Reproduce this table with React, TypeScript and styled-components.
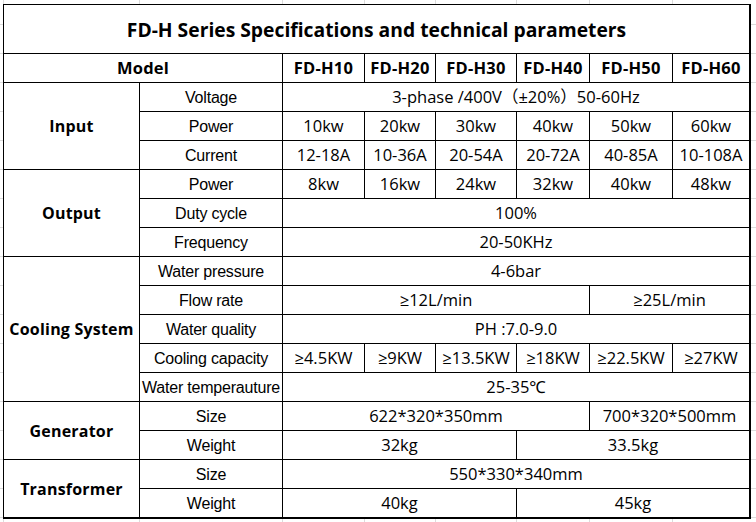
import React from "react";
import styled, { createGlobalStyle, css } from "styled-components";

const GlobalStyle = createGlobalStyle`
  html, body {
    margin: 0;
    padding: 0;
    background-color: #ffffff;
  }
  body {
    min-height: 522px;
    background-image:
      linear-gradient(#dcdcdc, #dcdcdc),
      linear-gradient(#dcdcdc, #dcdcdc),
      linear-gradient(#dcdcdc, #dcdcdc),
      linear-gradient(#dcdcdc, #dcdcdc),
      linear-gradient(#dcdcdc, #dcdcdc),
      linear-gradient(#dcdcdc, #dcdcdc),
      linear-gradient(#dcdcdc, #dcdcdc),
      linear-gradient(#dcdcdc, #dcdcdc),
      repeating-linear-gradient(to bottom, transparent 0 28px, #dcdcdc 28px 29px);
    background-size: 1px 100%, 1px 100%, 1px 100%, 1px 100%, 1px 100%, 1px 100%, 1px 100%, 1px 100%, 100% 100%;
    background-position: 3px 0, 139px 0, 282px 0, 364px 0, 435px 0, 516px 0, 589px 0, 672px 0, 0 25px;
    background-repeat: no-repeat, no-repeat, no-repeat, no-repeat, no-repeat, no-repeat, no-repeat, no-repeat, repeat;
  }
`;

const Page = styled.div`
  padding: 4px 0 0 3px;
`;

const Table = styled.div`
  display: grid;
  width: fit-content;
  grid-template-columns: 135px 142px 81px 70px 80px 72px 82px 76px;
  grid-template-rows: 48px repeat(16, 28px);
  gap: 1px;
  padding: 1px 2px 2px 1px;
  background: #000000;
`;

type Variant = "title" | "head" | "group" | "label" | "value";

const variants: Record<Variant, ReturnType<typeof css>> = {
  title: css`
    font-family: "Open Sans", "Noto Sans", sans-serif;
    font-weight: 700;
    font-size: 19.3px;
    padding-top: 1px;
  `,
  head: css`
    font-family: "Open Sans", "Noto Sans", sans-serif;
    font-weight: 700;
    font-size: 16.5px;
    letter-spacing: 0.2px;
  `,
  group: css`
    font-family: "Open Sans", "Noto Sans", sans-serif;
    font-weight: 700;
    font-size: 16px;
    letter-spacing: 0.2px;
  `,
  label: css`
    font-family: "Liberation Sans", Arial, sans-serif;
    font-weight: 400;
    font-size: 16px;
    letter-spacing: -0.2px;
    padding-top: 1px;
  `,
  value: css`
    font-family: "Open Sans", "Noto Sans", "Noto Sans CJK SC", sans-serif;
    font-weight: 400;
    font-size: 16.5px;
    letter-spacing: 0;
    padding-top: 1px;
  `,
};

const Cell = styled.div<{ $span?: number; $rows?: number; $variant: Variant }>`
  grid-column: span ${(p) => p.$span ?? 1};
  grid-row: span ${(p) => p.$rows ?? 1};
  background: #ffffff;
  color: #000000;
  display: flex;
  align-items: center;
  justify-content: center;
  white-space: nowrap;
  overflow: hidden;
  line-height: 1;
  ${(p) => variants[p.$variant]}
`;

type Value = string | [string, number];

interface SpecRow {
  label: string;
  values: Value[];
}

interface Section {
  group: string;
  rows: SpecRow[];
}

const models = ["FD-H10", "FD-H20", "FD-H30", "FD-H40", "FD-H50", "FD-H60"];

const sections: Section[] = [
  {
    group: "Input",
    rows: [
      { label: "Voltage", values: [["3-phase /400V（±20%）50-60Hz", 6]] },
      { label: "Power", values: ["10kw", "20kw", "30kw", "40kw", "50kw", "60kw"] },
      { label: "Current", values: ["12-18A", "10-36A", "20-54A", "20-72A", "40-85A", "10-108A"] },
    ],
  },
  {
    group: "Output",
    rows: [
      { label: "Power", values: ["8kw", "16kw", "24kw", "32kw", "40kw", "48kw"] },
      { label: "Duty cycle", values: [["100%", 6]] },
      { label: "Frequency", values: [["20-50KHz", 6]] },
    ],
  },
  {
    group: "Cooling System",
    rows: [
      { label: "Water pressure", values: [["4-6bar", 6]] },
      { label: "Flow rate", values: [["≥12L/min", 4], ["≥25L/min", 2]] },
      { label: "Water quality", values: [["PH :7.0-9.0", 6]] },
      { label: "Cooling capacity", values: ["≥4.5KW", "≥9KW", "≥13.5KW", "≥18KW", "≥22.5KW", "≥27KW"] },
      { label: "Water temperauture", values: [["25-35℃", 6]] },
    ],
  },
  {
    group: "Generator",
    rows: [
      { label: "Size", values: [["622*320*350mm", 4], ["700*320*500mm", 2]] },
      { label: "Weight", values: [["32kg", 3], ["33.5kg", 3]] },
    ],
  },
  {
    group: "Transformer",
    rows: [
      { label: "Size", values: [["550*330*340mm", 6]] },
      { label: "Weight", values: [["40kg", 3], ["45kg", 3]] },
    ],
  },
];

export default function App() {
  return (
    <>
      <GlobalStyle />
      <Page>
        <Table>
          <Cell $variant="title" $span={8}>
            FD-H Series Specifications and technical parameters
          </Cell>
          <Cell $variant="head" $span={2}>
            Model
          </Cell>
          {models.map((m) => (
            <Cell key={m} $variant="head">
              {m}
            </Cell>
          ))}
          {sections.map((section) => (
            <React.Fragment key={section.group}>
              <Cell $variant="group" $rows={section.rows.length}>
                {section.group}
              </Cell>
              {section.rows.map((row) => (
                <React.Fragment key={row.label}>
                  <Cell $variant="label">{row.label}</Cell>
                  {row.values.map((v, i) => {
                    const [text, span] = typeof v === "string" ? [v, 1] : v;
                    return (
                      <Cell key={i} $variant="value" $span={span}>
                        {text}
                      </Cell>
                    );
                  })}
                </React.Fragment>
              ))}
            </React.Fragment>
          ))}
        </Table>
      </Page>
    </>
  );
}
